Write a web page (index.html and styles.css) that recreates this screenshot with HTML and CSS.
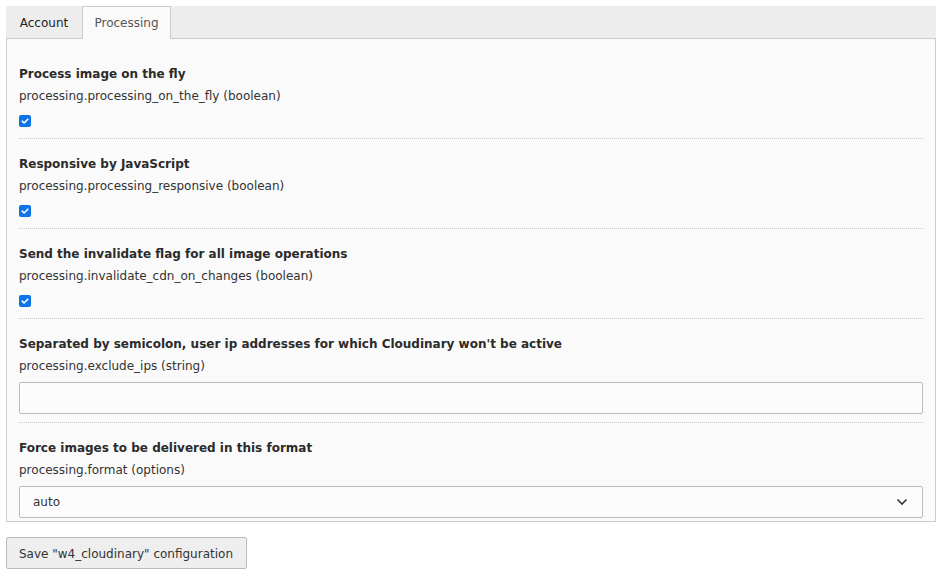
FILE: index.html
```html
<!DOCTYPE html>
<html>
<head>
<meta charset="utf-8">
<link rel="stylesheet" href="styles.css">
</head>
<body>
<div class="tabs">
  <div class="tab">Account</div>
  <div class="tab active">Processing</div>
</div>
<div class="panel">
  <div class="field first">
    <div class="title">Process image on the fly</div>
    <div class="desc">processing.processing_on_the_fly (boolean)</div>
    <span class="check"><svg viewBox="0 0 12 12" width="12" height="12"><path d="M3.2 6.2 L5.1 8 L8.8 4.2" fill="none" stroke="#fff" stroke-width="1.6" stroke-linecap="round" stroke-linejoin="round"/></svg></span>
  </div>
  <div class="field">
    <div class="title">Responsive by JavaScript</div>
    <div class="desc">processing.processing_responsive (boolean)</div>
    <span class="check"><svg viewBox="0 0 12 12" width="12" height="12"><path d="M3.2 6.2 L5.1 8 L8.8 4.2" fill="none" stroke="#fff" stroke-width="1.6" stroke-linecap="round" stroke-linejoin="round"/></svg></span>
  </div>
  <div class="field">
    <div class="title">Send the invalidate flag for all image operations</div>
    <div class="desc">processing.invalidate_cdn_on_changes (boolean)</div>
    <span class="check"><svg viewBox="0 0 12 12" width="12" height="12"><path d="M3.2 6.2 L5.1 8 L8.8 4.2" fill="none" stroke="#fff" stroke-width="1.6" stroke-linecap="round" stroke-linejoin="round"/></svg></span>
  </div>
  <div class="field">
    <div class="title">Separated by semicolon, user ip addresses for which Cloudinary won't be active</div>
    <div class="desc">processing.exclude_ips (string)</div>
    <div class="input"></div>
  </div>
  <div class="field last">
    <div class="title">Force images to be delivered in this format</div>
    <div class="desc">processing.format (options)</div>
    <div class="input select"><span>auto</span><svg viewBox="0 0 12 8" width="12" height="8"><path d="M1.5 1.5 L6 6 L10.5 1.5" fill="none" stroke="#333" stroke-width="1.6"/></svg></div>
  </div>
</div>
<div class="btn">Save "w4_cloudinary" configuration</div>
</body>
</html>
```
FILE: styles.css
```css
html, body {
  margin: 0;
  padding: 0;
}
body {
  padding: 6px 10px 0 6px;
  font-family: "DejaVu Sans", Verdana, sans-serif;
  font-size: 12px;
  color: #333;
  background: #fff;
}
.tabs {
  display: flex;
  height: 32px;
  background: #ededed;
  width: 930px;
}
.tab {
  display: flex;
  align-items: center;
  justify-content: center;
  height: 32px;
  box-sizing: border-box;
  padding-top: 1px;
  color: #222;
}
.tab:first-child {
  width: 76px;
}
.tab.active {
  width: 89px;
  padding-top: 0;
  background: #fafafa;
  border: 1px solid #ccc;
  border-bottom: none;
  height: 33px;
  color: #555;
  position: relative;
  z-index: 1;
}
.panel {
  width: 930px;
  box-sizing: border-box;
  background: #fafafa;
  border: 1px solid #ccc;
  padding: 10px 12px 3px 12px;
}
.field {
  border-top: 1px dotted #ccc;
  padding: 16px 0 10px;
}
.field.first {
  border-top: none;
  padding-top: 16px;
}
.field.last {
  padding-bottom: 0;
}
.title {
  font-weight: bold;
  line-height: 18px;
  margin-bottom: 4px;
  color: #2b2b2b;
}
.desc {
  line-height: 18px;
}
.check {
  display: flex;
  align-items: center;
  justify-content: center;
  width: 12px;
  height: 12px;
  margin: 10px 0 1px;
  background: #0d74e8;
  border-radius: 2px;
}
.input {
  margin-top: 7px;
  height: 32px;
  box-sizing: border-box;
  border: 1px solid #bbb;
  border-radius: 2px;
  background: #fcfcfc;
  margin-bottom: -2px;
}
.select {
  margin-top: 7px;
  margin-bottom: 0;
  display: flex;
  align-items: center;
  justify-content: space-between;
  padding: 0 14px 0 13px;
}
.btn {
  display: inline-flex;
  align-items: center;
  margin-top: 15px;
  height: 32px;
  box-sizing: border-box;
  padding: 1px 12px 0;
  width: 241px;
  border: 1px solid #bbb;
  border-radius: 2px;
  background: #eee;
  color: #333;
}
```
